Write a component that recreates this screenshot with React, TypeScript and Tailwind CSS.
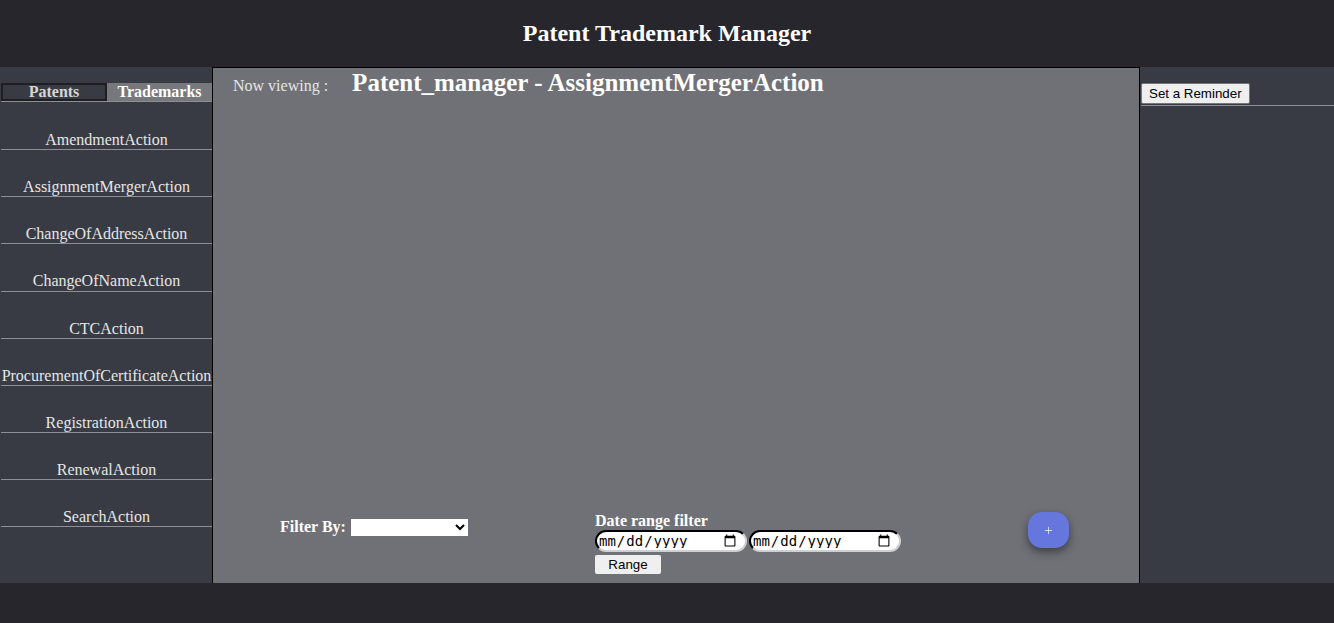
import { Plus } from 'lucide-react';

const actions = [
  'AmendmentAction',
  'AssignmentMergerAction',
  'ChangeOfAddressAction',
  'ChangeOfNameAction',
  'CTCAction',
  'ProcurementOfCertificateAction',
  'RegistrationAction',
  'RenewalAction',
  'SearchAction',
];

const serif = "font-['Liberation_Serif',_'Times_New_Roman',_serif]";
const sans = "font-['Liberation_Sans',_Arial,_sans-serif]";

function DateInput() {
  return (
    <input
      type="date"
      className="w-[152px] h-[22px] rounded-full bg-white text-black border-2 border-t-black border-l-black border-r-[#d0d0d0] border-b-[#d0d0d0] pl-[1px] pr-[6px] font-['DejaVu_Sans_Mono',monospace] text-[14px] leading-none"
    />
  );
}

export default function App() {
  return (
    <div className={`w-[1334px] h-[623px] flex flex-col bg-white ${serif}`}>
      <header className="h-[67px] bg-[#27262c] flex items-center justify-center pb-[2px]">
        <h1 className="text-white text-[24px] font-bold">Patent Trademark Manager</h1>
      </header>

      <div className="flex h-[516px]">
        <aside className="w-[212px] bg-[#383b43] pl-[1px] pt-[16px]">
          <div className="flex border-b border-[#8e8f94]">
            <button className="w-[106px] h-[18px] border-2 border-[#1e1f23] text-[#d6d6d6] font-bold text-[16px] leading-[14px]">
              Patents
            </button>
            <button className="flex-1 h-[18px] bg-[#77787c] text-white font-bold text-[16px] leading-[18px]">
              Trademarks
            </button>
          </div>
          <ul className="mt-[1px]">
            {actions.map((a) => (
              <li
                key={a}
                className="pt-[28px] h-[47.16px] border-b border-[#8e8f94] text-center text-[#e6e6e6] text-[16px] leading-[18px] whitespace-nowrap"
              >
                {a}
              </li>
            ))}
          </ul>
        </aside>

        <main className="w-[928px] bg-[#707176] border-l border-r border-t border-black flex flex-col justify-between">
          <div className="flex items-baseline pl-[20px] gap-[24px]">
            <span className="text-[#e6e6e6] text-[16px]">Now viewing :</span>
            <span className="text-white text-[25px] font-bold leading-[29px]">
              Patent_manager - AssignmentMergerAction
            </span>
          </div>

          <div className="flex items-start pl-[67px] pb-[9px]">
            <div className="w-[315px] flex items-center gap-[5px] mt-[3px]">
              <span className="text-white font-bold text-[16px]">Filter By:</span>
              <select className={`w-[117px] h-[17px] bg-white text-black text-[13px] ${sans}`}>
                <option></option>
              </select>
            </div>
            <div className="w-[433px] flex flex-col items-start">
              <span className="text-white font-bold text-[16px] leading-[18px]">Date range filter</span>
              <div className="flex gap-[2px]">
                <DateInput />
                <DateInput />
              </div>
              <button
                className={`mt-[3px] w-[66px] h-[19px] bg-[#efefef] rounded-[2px] text-black text-[13.33px] ${sans}`}
              >
                Range
              </button>
            </div>
            <button className="w-[41px] h-[36px] rounded-[14px] bg-[#6576dc] text-white flex items-center justify-center shadow-[0_4px_8px_rgba(20,20,35,0.55)]">
              <Plus className="w-[11px] h-[11px]" strokeWidth={1.5} />
            </button>
          </div>
        </main>

        <aside className="flex-1 bg-[#383b43] pl-[1px] pt-[16px]">
          <div className="flex border-b border-[#8e8f94] pb-[1px]">
            <button
              className={`h-[21px] px-[7px] bg-[#efefef] border border-[#767676] rounded-[2px] text-black text-[13.33px] leading-[16px] ${sans}`}
            >
              Set a Reminder
            </button>
          </div>
        </aside>
      </div>

      <footer className="h-[40px] bg-[#27262c]" />
    </div>
  );
}
